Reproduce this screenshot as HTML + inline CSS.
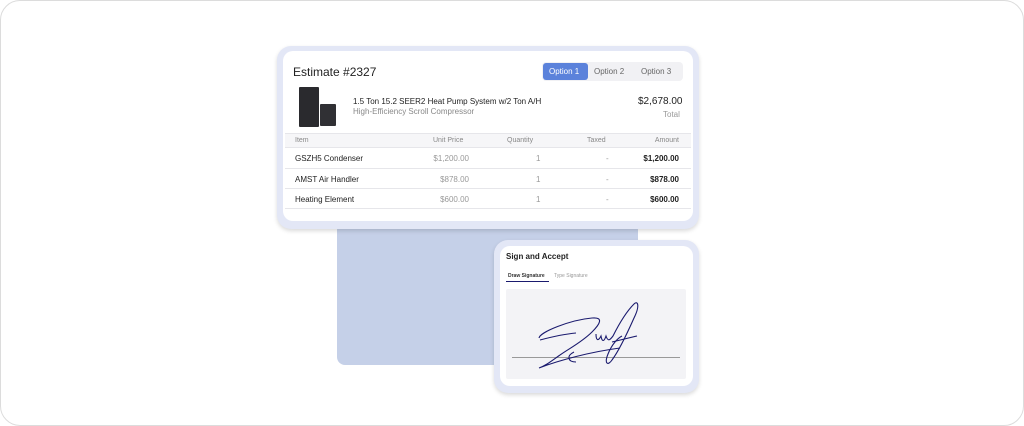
<!DOCTYPE html><html><head><style>
*{margin:0;padding:0;box-sizing:border-box}
body{width:1024px;height:426px;background:#fff;font-family:"Liberation Sans",sans-serif;position:relative;overflow:hidden}
.frame{position:absolute;left:0;top:0;width:1024px;height:426px;border:1px solid #dcdcdc;border-radius:20px}
.blue{position:absolute;left:337px;top:222px;width:301px;height:143px;background:#c5d0e8;border-radius:8px}
.glow{position:absolute;background:#e3e7f6;border-radius:14px;box-shadow:0 2px 4px rgba(0,0,0,.15)}
.card{position:absolute;background:#fff;border-radius:10px}
.t{position:absolute;white-space:nowrap}
.row{position:absolute;left:285px;width:406px;border-top:1px solid #e6e6ea;height:21px;font-size:8px;color:#222}
.row span{position:absolute;top:6px}
</style></head><body>
<div class="frame"></div>
<div class="blue"></div>
<div class="glow" style="left:277px;top:46px;width:422px;height:183px"></div>
<div class="card" style="left:283px;top:51px;width:410px;height:170px"></div>
<div class="t" style="left:293px;top:65px;font-size:12px;color:#222">Estimate #2327</div>
<div style="position:absolute;left:542px;top:62px;width:141px;height:19px;background:#f1f1f4;border-radius:4px"></div>
<div style="position:absolute;left:543px;top:63px;width:45px;height:17px;background:#5b82db;border-radius:3px"></div>
<div class="t" style="left:549px;top:67px;font-size:8px;color:#fff">Option 1</div>
<div class="t" style="left:594px;top:67px;font-size:8px;color:#666">Option 2</div>
<div class="t" style="left:641px;top:67px;font-size:8px;color:#666">Option 3</div>
<div style="position:absolute;left:299px;top:87px;width:20px;height:40px;background:#2a2a2e;border-radius:1px"></div>
<div style="position:absolute;left:320px;top:104px;width:16px;height:22px;background:#303034;border-radius:1px"></div>
<div class="t" style="left:353px;top:97px;font-size:8px;color:#222">1.5 Ton 15.2 SEER2 Heat Pump System w/2 Ton A/H</div>
<div class="t" style="left:353px;top:107px;font-size:8px;color:#888">High-Efficiency Scroll Compressor</div>
<div class="t" style="left:638px;top:96px;font-size:10px;color:#222">$2,678.00</div>
<div class="t" style="left:663px;top:110px;font-size:8px;color:#999">Total</div>
<div class="row" style="top:133px;background:#f6f6f8;height:14px;color:#888;font-size:7px"><span style="top:3px;left:10px">Item</span><span style="top:3px;left:148px">Unit Price</span><span style="top:3px;left:222px">Quantity</span><span style="top:3px;left:302px">Taxed</span><span style="top:3px;right:12px">Amount</span></div>
<div class="row" style="top:147px"><span style="left:10px">GSZH5 Condenser</span><span style="right:222px;color:#999">$1,200.00</span><span style="left:251px;color:#999">1</span><span style="left:321px;color:#999">-</span><span style="right:12px;font-weight:bold">$1,200.00</span></div>
<div class="row" style="top:168px"><span style="left:10px">AMST Air Handler</span><span style="right:222px;color:#999">$878.00</span><span style="left:251px;color:#999">1</span><span style="left:321px;color:#999">-</span><span style="right:12px;font-weight:bold">$878.00</span></div>
<div class="row" style="top:188px;border-bottom:1px solid #e6e6ea"><span style="left:10px">Heating Element</span><span style="right:222px;color:#999">$600.00</span><span style="left:251px;color:#999">1</span><span style="left:321px;color:#999">-</span><span style="right:12px;font-weight:bold">$600.00</span></div>
<div class="glow" style="left:494px;top:240px;width:205px;height:153px"></div>
<div class="card" style="left:500px;top:246px;width:193px;height:140px"></div>
<div class="t" style="left:506px;top:252px;font-size:8px;font-weight:bold;color:#222">Sign and Accept</div>
<div class="t" style="left:508px;top:273px;font-size:5px;font-weight:bold;color:#333">Draw Signature</div>
<div class="t" style="left:554px;top:273px;font-size:5px;color:#999">Type Signature</div>
<div style="position:absolute;left:506px;top:281px;width:43px;height:1px;background:#1a1a6e"></div>
<div style="position:absolute;left:506px;top:289px;width:180px;height:90px;background:#f3f3f6;border-radius:2px"></div>
<div style="position:absolute;left:512px;top:357px;width:168px;height:1px;background:#999"></div>
<svg style="position:absolute;left:500px;top:290px" width="180" height="80" fill="none" stroke="#1a1a6e" stroke-width="1.1">
<path d="M39 48 C40 42 70 30 92 28 C104 27 100 34 92 42 C82 52 70 58 60 65"/>
<path d="M40 50 C55 46 65 44 76 43"/>
<path d="M60 65 C50 72 45 76 39 78 C60 70 90 62 120 58"/>
<path d="M74 62 C66 66 68 72 76 72"/>
<path d="M96 44 C96 50 98 52 101 46 C102 52 104 52 106 46 C108 52 110 50 113 46 C118 36 126 22 134 14 C138 10 140 16 134 28 C126 46 118 62 112 70 C108 76 104 74 108 64 C112 54 118 48 122 46"/>
<path d="M112 52 L137 46"/>
</svg>
</body></html>
